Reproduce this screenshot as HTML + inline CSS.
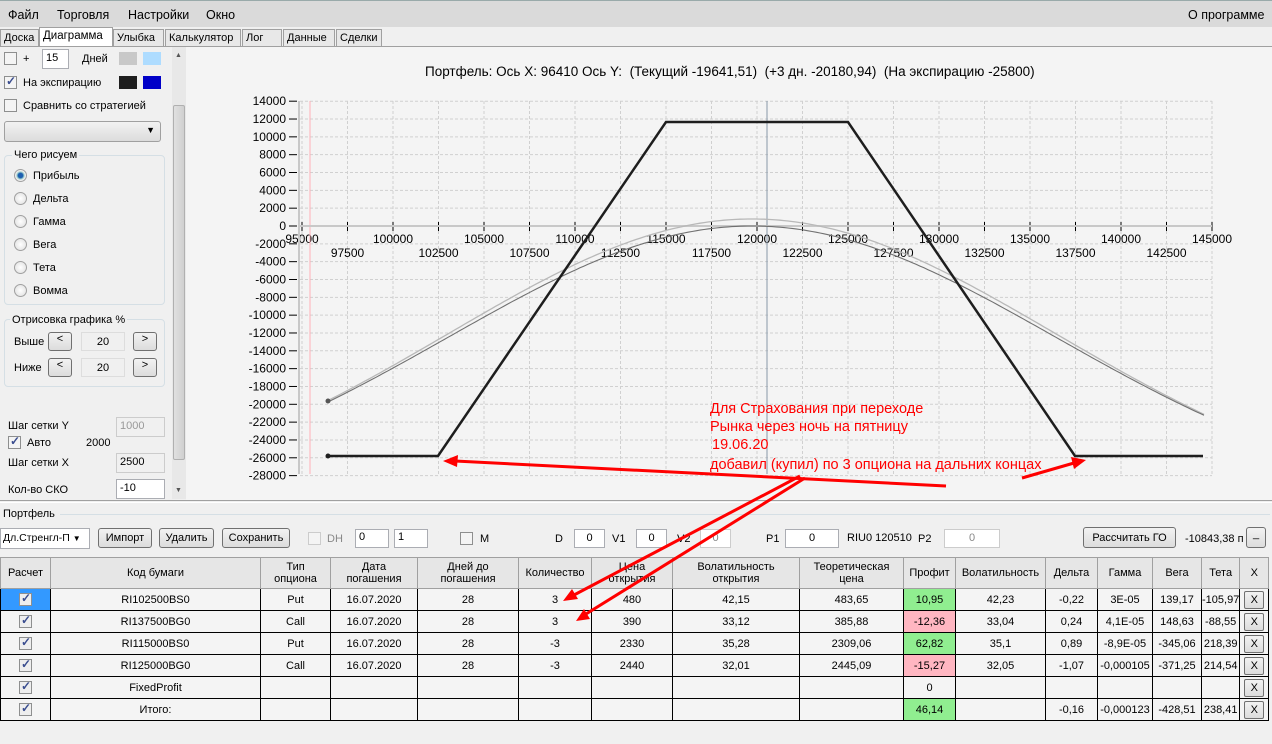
<!DOCTYPE html>
<html><head><meta charset="utf-8">
<style>
*{box-sizing:border-box;margin:0;padding:0}
body{width:1272px;height:744px;overflow:hidden;background:#f0f0f0;font-family:"Liberation Sans",sans-serif;font-size:11px;color:#000;position:relative}
.a{position:absolute;white-space:nowrap}
.menu{left:0;top:0;width:1272px;height:27px;background:#dadada;border-top:1px solid #9aa;}
.menu span{position:absolute;top:7px;font-size:12.5px}
.tab{position:absolute;top:29px;height:17px;border:1px solid #a0a0a0;border-bottom:none;background:#e8e8e8;padding:2px 3px;font-size:11px}
.cb{position:absolute;width:13px;height:13px;border:1px solid #8e8f8f;background:#f4f4f4}
.cb.on::after{content:"✓";position:absolute;left:1px;top:-3px;font-size:12px;color:#3a4d8f;font-weight:bold}
.rb{position:absolute;width:13px;height:13px;border-radius:50%;border:1px solid #a0a0a0;background:radial-gradient(#fff,#ddd)}
.btn{position:absolute;border:1px solid #707070;border-radius:3px;background:linear-gradient(#f2f2f2,#dcdcdc);text-align:center;font-size:11px}
.inp{position:absolute;border:1px solid #abadb3;background:#fff;font-size:11px;padding:2px 3px}
.grp{position:absolute;border:1px solid #d5dfe5;border-radius:4px}
table{position:absolute;left:0;top:557px;border-collapse:collapse;background:#f4f4f4;table-layout:fixed}
td,th{border:1px solid #000;text-align:center;font-size:11px;font-weight:normal;height:22px;padding:0;overflow:hidden;white-space:nowrap}
th{background:#e6e6e6;height:31px;line-height:12px;border-color:#a0a0a0}
td.g{background:#90ee90}td.p{background:#ffb6c1}
.x{display:inline-block;width:20px;height:18px;border:1px solid #707070;border-radius:2px;background:linear-gradient(#f2f2f2,#dcdcdc);line-height:16px}
.chk{display:inline-block;width:13px;height:13px;border:1px solid #8e8f8f;background:#eee;position:relative;vertical-align:middle}
.chk::after{content:"✓";position:absolute;left:1px;top:-3px;font-size:12px;color:#3a4d8f;font-weight:bold}
</style></head><body>
<div class="a menu"><span style="left:8px">Файл</span><span style="left:57px">Торговля</span><span style="left:128px">Настройки</span><span style="left:206px">Окно</span><span style="left:1188px">О программе</span></div>
<div class="tab" style="left:0;width:39px">Доска</div>
<div class="tab" style="left:39px;top:27px;height:20px;background:#fff;width:74px;font-size:11.5px">Диаграмма</div>
<div class="tab" style="left:113px;width:51px">Улыбка</div>
<div class="tab" style="left:165px;width:76px">Калькулятор</div>
<div class="tab" style="left:242px;width:40px">Лог</div>
<div class="tab" style="left:283px;width:52px">Данные</div>
<div class="tab" style="left:336px;width:46px">Сделки</div>
<div class="a" style="left:0;top:46px;width:1272px;height:455px;border-top:1px solid #a0a0a0;background:#f4f4f4"></div>
<div class="a" style="left:0;top:47px;width:186px;height:454px;background:#f0f0f0"></div>
<div class="cb" style="left:4px;top:52px"></div><div class="a" style="left:23px;top:53px">+</div>
<div class="inp" style="left:42px;top:49px;width:27px;height:20px">15</div>
<div class="a" style="left:82px;top:53px">Дней</div>
<div class="a" style="left:119px;top:52px;width:18px;height:13px;background:#c8c8c8"></div>
<div class="a" style="left:143px;top:52px;width:18px;height:13px;background:#aedcff"></div>
<div class="cb on" style="left:4px;top:76px"></div><div class="a" style="left:23px;top:77px">На экспирацию</div>
<div class="a" style="left:119px;top:76px;width:18px;height:13px;background:#1e1e1e"></div>
<div class="a" style="left:143px;top:76px;width:18px;height:13px;background:#0000c8"></div>
<div class="cb" style="left:4px;top:99px"></div><div class="a" style="left:23px;top:100px">Сравнить со стратегией</div>
<div class="btn" style="left:4px;top:121px;width:157px;height:21px;border-color:#a0a0a0"><span style="position:absolute;right:5px;top:3px;font-size:9px">▼</span></div>
<div class="grp" style="left:4px;top:155px;width:161px;height:150px"></div>
<div class="a" style="left:12px;top:149px;background:#f0f0f0;padding:0 2px">Чего рисуем</div>
<div class="rb" style="left:14px;top:169px;background:radial-gradient(#1c5fb0 30%,#9cc 45%,#eee 60%)"></div><div class="a" style="left:33px;top:170px">Прибыль</div>
<div class="rb" style="left:14px;top:192px"></div><div class="a" style="left:33px;top:193px">Дельта</div>
<div class="rb" style="left:14px;top:215px"></div><div class="a" style="left:33px;top:216px">Гамма</div>
<div class="rb" style="left:14px;top:238px"></div><div class="a" style="left:33px;top:239px">Вега</div>
<div class="rb" style="left:14px;top:261px"></div><div class="a" style="left:33px;top:262px">Тета</div>
<div class="rb" style="left:14px;top:284px"></div><div class="a" style="left:33px;top:285px">Вомма</div>
<div class="grp" style="left:4px;top:319px;width:161px;height:68px"></div>
<div class="a" style="left:10px;top:314px;background:#f0f0f0;padding:0 2px">Отрисовка графика %</div>
<div class="a" style="left:14px;top:336px">Выше</div>
<div class="btn" style="left:48px;top:332px;width:24px;height:19px">&lt;</div>
<div class="a" style="left:81px;top:332px;width:44px;height:19px;border:1px solid #ddd;text-align:center;padding-top:3px">20</div>
<div class="btn" style="left:133px;top:332px;width:24px;height:19px">&gt;</div>
<div class="a" style="left:14px;top:362px">Ниже</div>
<div class="btn" style="left:48px;top:358px;width:24px;height:19px">&lt;</div>
<div class="a" style="left:81px;top:358px;width:44px;height:19px;border:1px solid #ddd;text-align:center;padding-top:3px">20</div>
<div class="btn" style="left:133px;top:358px;width:24px;height:19px">&gt;</div>
<div class="a" style="left:8px;top:420px">Шаг сетки Y</div>
<div class="inp" style="left:116px;top:417px;width:49px;height:20px;background:#f0f0f0;color:#999;border-color:#ccc">1000</div>
<div class="cb on" style="left:8px;top:436px"></div><div class="a" style="left:27px;top:437px">Авто</div><div class="a" style="left:86px;top:437px">2000</div>
<div class="a" style="left:8px;top:457px">Шаг сетки X</div>
<div class="inp" style="left:116px;top:453px;width:49px;height:20px;background:#f0f0f0;border-color:#ccc">2500</div>
<div class="a" style="left:8px;top:484px">Кол-во СКО</div>
<div class="inp" style="left:116px;top:479px;width:49px;height:20px">-10</div>
<div class="a" style="left:172px;top:47px;width:14px;height:452px;background:#e8e8e8"></div>
<div class="a" style="left:173px;top:105px;width:12px;height:355px;background:linear-gradient(90deg,#e0e0e0,#d0d0d0);border:1px solid #b0b0b0;border-radius:2px"></div>
<div class="a" style="left:175px;top:52px;font-size:7px;color:#555">▲</div>
<div class="a" style="left:175px;top:487px;font-size:7px;color:#555">▼</div>
<div class="a" style="left:425px;top:64px;font-size:13.5px">Портфель: Ось X: 96410 Ось Y:&nbsp; (Текущий -19641,51)&nbsp; (+3 дн. -20180,94)&nbsp; (На экспирацию -25800)</div>
<div class="a" style="left:0;top:500px;width:1272px;height:3px;border-top:1px solid #a0a0a0;border-bottom:1px solid #fff"></div>
<div class="a" style="left:3px;top:508px;font-size:11px">Портфель</div>
<div class="a" style="left:60px;top:514px;width:1210px;border-top:1px solid #d5dfe5"></div>
<div class="inp" style="left:0;top:528px;width:90px;height:21px;padding:3px 2px;font-size:10.5px">Дл.Стренгл-П <span style="font-size:8px">▼</span></div>
<div class="btn" style="left:98px;top:528px;width:54px;height:20px;padding-top:3px">Импорт</div>
<div class="btn" style="left:159px;top:528px;width:55px;height:20px;padding-top:3px">Удалить</div>
<div class="btn" style="left:222px;top:528px;width:68px;height:20px;padding-top:3px">Сохранить</div>
<div class="cb" style="left:308px;top:532px;border-color:#ccc"></div><div class="a" style="left:327px;top:533px;color:#888">DH</div>
<div class="inp" style="left:355px;top:529px;width:34px;height:19px;padding:1px 3px">0</div>
<div class="inp" style="left:394px;top:529px;width:34px;height:19px;padding:1px 3px">1</div>
<div class="cb" style="left:460px;top:532px"></div><div class="a" style="left:480px;top:533px">M</div>
<div class="a" style="left:555px;top:533px">D</div><div class="inp" style="left:574px;top:529px;width:31px;height:19px;text-align:center">0</div>
<div class="a" style="left:612px;top:533px">V1</div><div class="inp" style="left:636px;top:529px;width:31px;height:19px;text-align:center">0</div>
<div class="a" style="left:677px;top:533px">V2</div><div class="inp" style="left:700px;top:529px;width:31px;height:19px;text-align:center;color:#888;border-color:#ccc">0</div>
<div class="a" style="left:766px;top:533px">P1</div><div class="inp" style="left:785px;top:529px;width:54px;height:19px;text-align:center">0</div>
<div class="a" style="left:847px;top:532px">RIU0 120510</div><div class="a" style="left:918px;top:533px">P2</div>
<div class="inp" style="left:944px;top:529px;width:56px;height:19px;text-align:center;color:#888;border-color:#ccc">0</div>
<div class="btn" style="left:1083px;top:527px;width:93px;height:21px;padding-top:4px">Рассчитать ГО</div>
<div class="a" style="left:1185px;top:533px">-10843,38 п</div>
<div class="btn" style="left:1246px;top:527px;width:20px;height:21px">_</div>
<table>
<colgroup><col style="width:50px"><col style="width:210px"><col style="width:70px"><col style="width:87px"><col style="width:101px"><col style="width:73px"><col style="width:81px"><col style="width:127px"><col style="width:104px"><col style="width:52px"><col style="width:90px"><col style="width:52px"><col style="width:55px"><col style="width:49px"><col style="width:37px"><col style="width:29px"></colgroup>
<tr><th>Расчет</th><th>Код бумаги</th><th>Тип<br>опциона</th><th>Дата<br>погашения</th><th>Дней до<br>погашения</th><th>Количество</th><th>Цена<br>открытия</th><th>Волатильность<br>открытия</th><th>Теоретическая<br>цена</th><th>Профит</th><th>Волатильность</th><th>Дельта</th><th>Гамма</th><th>Вега</th><th>Тета</th><th>X</th></tr>
<tr><td style="background:#3399ff"><span class="chk"></span></td><td>RI102500BS0</td><td>Put</td><td>16.07.2020</td><td>28</td><td>3</td><td>480</td><td>42,15</td><td>483,65</td><td class="g">10,95</td><td>42,23</td><td>-0,22</td><td>3E-05</td><td>139,17</td><td>-105,97</td><td><span class="x">X</span></td></tr>
<tr><td><span class="chk"></span></td><td>RI137500BG0</td><td>Call</td><td>16.07.2020</td><td>28</td><td>3</td><td>390</td><td>33,12</td><td>385,88</td><td class="p">-12,36</td><td>33,04</td><td>0,24</td><td>4,1E-05</td><td>148,63</td><td>-88,55</td><td><span class="x">X</span></td></tr>
<tr><td><span class="chk"></span></td><td>RI115000BS0</td><td>Put</td><td>16.07.2020</td><td>28</td><td>-3</td><td>2330</td><td>35,28</td><td>2309,06</td><td class="g">62,82</td><td>35,1</td><td>0,89</td><td>-8,9E-05</td><td>-345,06</td><td>218,39</td><td><span class="x">X</span></td></tr>
<tr><td><span class="chk"></span></td><td>RI125000BG0</td><td>Call</td><td>16.07.2020</td><td>28</td><td>-3</td><td>2440</td><td>32,01</td><td>2445,09</td><td class="p">-15,27</td><td>32,05</td><td>-1,07</td><td>-0,000105</td><td>-371,25</td><td>214,54</td><td><span class="x">X</span></td></tr>
<tr><td><span class="chk"></span></td><td>FixedProfit</td><td></td><td></td><td></td><td></td><td></td><td></td><td></td><td>0</td><td></td><td></td><td></td><td></td><td></td><td><span class="x">X</span></td></tr>
<tr><td><span class="chk"></span></td><td>Итого:</td><td></td><td></td><td></td><td></td><td></td><td></td><td></td><td class="g">46,14</td><td></td><td>-0,16</td><td>-0,000123</td><td>-428,51</td><td>238,41</td><td><span class="x">X</span></td></tr>
</table>
<svg class="a" style="left:0;top:0;pointer-events:none" width="1272" height="744" id="ch">
<g id="grid" stroke="#d0d0d0" stroke-dasharray="3,2" stroke-width="1"></g>
<g id="lbl" font-family="Liberation Sans" font-size="12" fill="#000"></g>
<line x1="310" y1="101" x2="310" y2="474" stroke="#ffb0b8"/>
<line x1="767" y1="101" x2="767" y2="474" stroke="#8898a8"/>
<line x1="298" y1="226" x2="1212" y2="226" stroke="#c8c8c8" stroke-width="2"/>
<line x1="299" y1="101" x2="299" y2="474" stroke="#c8c8c8" stroke-width="2"/>
<path id="c1" fill="none" stroke="#b8b8b8" stroke-width="1.3"/>
<path id="c2" fill="none" stroke="#707070" stroke-width="1.1"/>
<polyline points="328,456 438,456 666,122 848,122 1075,456 1203,456" fill="none" stroke="#1e1e1e" stroke-width="2.5"/>
<circle cx="328" cy="401" r="2.5" fill="#555"/><circle cx="328" cy="456" r="2.5" fill="#1e1e1e"/>
<g fill="#ff0000" font-family="Liberation Sans" font-size="14.5"><text x="710" y="413">Для Страхования при переходе</text><text x="710" y="431">Рынка через ночь на пятницу</text><text x="712" y="449">19.06.20</text><text x="710" y="469">добавил (купил) по 3 опциона на дальних концах</text></g>
<g stroke="#ff0000" stroke-width="3" fill="#ff0000">
<line x1="946" y1="486" x2="455" y2="461"/><polygon points="443,461 458,455 457,467" stroke="none"/>
<line x1="1022" y1="478" x2="1074" y2="463"/><polygon points="1086,460 1071,457 1074,469" stroke="none"/>
<line x1="800" y1="476" x2="574" y2="595"/><polygon points="563,601 572,589 578,599" stroke="none"/>
<line x1="805" y1="478" x2="586" y2="614"/><polygon points="576,621 584,609 590,619" stroke="none"/>
</g>
</svg>
<script>
var NS="http://www.w3.org/2000/svg";
function el(p,t,a,txt){var e=document.createElementNS(NS,t);for(var k in a)e.setAttribute(k,a[k]);if(txt!=null)e.textContent=txt;p.appendChild(e);return e;}
var g=document.getElementById('grid'),L=document.getElementById('lbl');
function X(v){return 302+(v-95000)*0.0182;}
function Y(v){return 226-v/2000*17.83;}
for(var v=14000;v>=-28000;v-=2000){var y=Y(v);el(g,'line',{x1:300,x2:1212,y1:y,y2:y});el(L,'text',{x:286,y:y+4,'text-anchor':'end'},String(v));el(L,'line',{x1:289,x2:297,y1:y,y2:y,stroke:'#000'});}
for(var v=95000;v<=145000;v+=2500){var x=X(v);el(g,'line',{x1:x,x2:x,y1:101,y2:474});el(L,'line',{x1:x,x2:x,y1:222,y2:231,stroke:'#000'});
 var odd=((v-95000)/2500)%2==1;el(L,'text',{x:x,y:odd?257:243,'text-anchor':'middle'},String(v));}
function curve(id,py,A,c,s){var d='';for(var x=328;x<=1204;x+=4){var dd=(x-c)/s;var y=py+A*(1-Math.exp(-dd*dd));d+=(d?'L':'M')+x+','+y.toFixed(1);}document.getElementById(id).setAttribute('d',d);}
curve('c1',219,292,752,430);
curve('c2',226,283,752,430);
</script>
</body></html>
